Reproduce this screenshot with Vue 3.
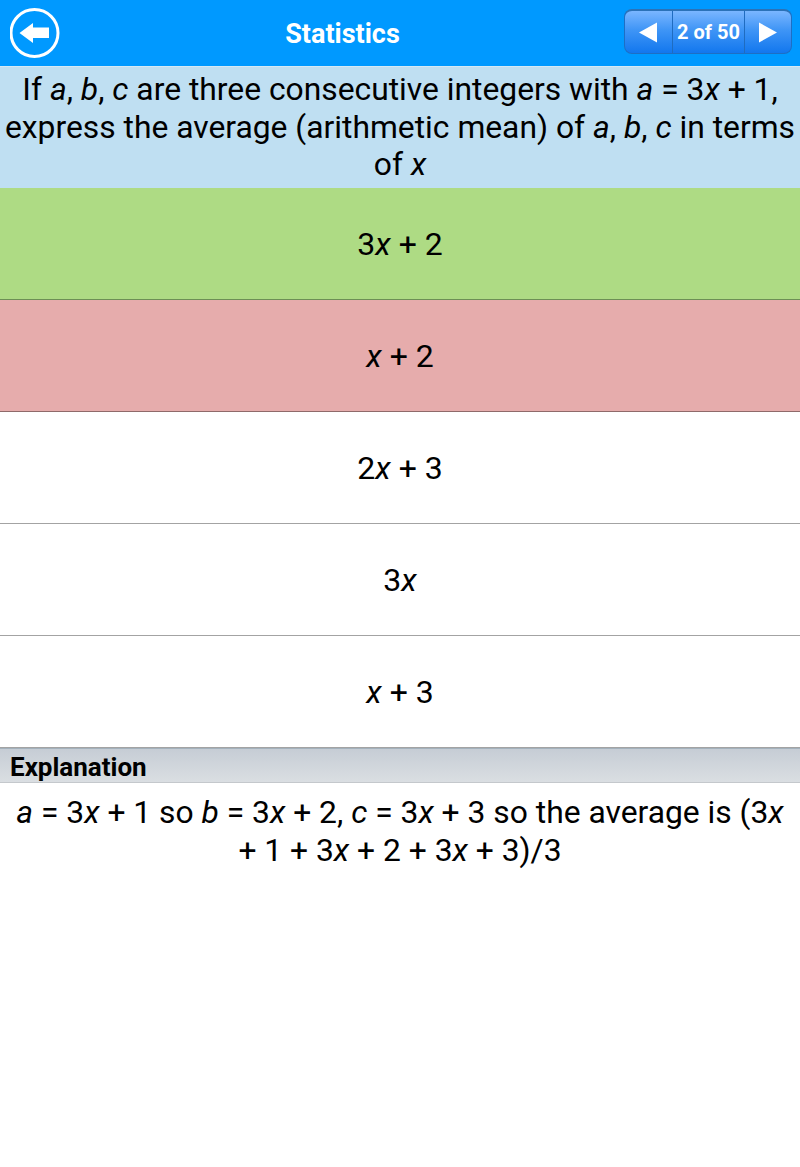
<script setup>
const answers = [
	{ id: 1, parts: [['3', false], ['x', true], [' + 2', false]], state: 'correct' },
	{ id: 2, parts: [['x', true], [' + 2', false]], state: 'wrong' },
	{ id: 3, parts: [['2', false], ['x', true], [' + 3', false]], state: '' },
	{ id: 4, parts: [['3', false], ['x', true]], state: '' },
	{ id: 5, parts: [['x', true], [' + 3', false]], state: '' },
];
</script>

<template>
	<div class="screen">
		<header class="topbar">
			<button class="back-btn" aria-label="Back">
				<svg width="50" height="50" viewBox="0 0 50 50">
					<circle cx="24.5" cy="25" r="23.5" fill="none" stroke="#fff" stroke-width="3" />
					<path d="M9.5 25 L23 15 V19.5 H39 V30 H23 V35 Z" fill="#fff" />
				</svg>
			</button>
			<h1 class="title">Statistics</h1>
			<div class="pager">
				<button class="pager-arrow prev" aria-label="Previous">
					<svg width="20" height="21" viewBox="0 0 20 21"><path d="M1 10.5 L19 0.5 V20.5 Z" fill="#fff" /></svg>
				</button>
				<span class="pager-count">2 of 50</span>
				<button class="pager-arrow next" aria-label="Next">
					<svg width="20" height="21" viewBox="0 0 20 21"><path d="M19 10.5 L1 0.5 V20.5 Z" fill="#fff" /></svg>
				</button>
			</div>
		</header>

		<section class="question">
			If <i>a</i>, <i>b</i>, <i>c</i> are three consecutive integers with <i>a</i> = 3<i>x</i> + 1,
			express the average (arithmetic mean) of <i>a</i>, <i>b</i>, <i>c</i> in terms of <i>x</i>
		</section>

		<ul class="answers">
			<li
				v-for="a in answers"
				:key="a.id"
				class="answer"
				:class="a.state"
			>
				<span>
					<template v-for="(p, idx) in a.parts" :key="idx">
						<i v-if="p[1]">{{ p[0] }}</i>
						<template v-else>{{ p[0] }}</template>
					</template>
				</span>
			</li>
		</ul>

		<div class="explain-head">Explanation</div>
		<p class="explain-body">
			<i>a</i> = 3<i>x</i> + 1 so <i>b</i> = 3<i>x</i> + 2, <i>c</i> = 3<i>x</i> + 3 so the average is (3<i>x</i>
			+ 1 + 3<i>x</i> + 2 + 3<i>x</i> + 3)/3
		</p>
	</div>
</template>

<style scoped>
.screen {
	width: 800px;
	height: 1167px;
	background: #fff;
	font-family: Roboto, sans-serif;
	color: #000;
	overflow: hidden;
}
.topbar {
	display: flex;
	align-items: center;
	justify-content: space-between;
	height: 66px;
	padding: 0 8px 0 10px;
	box-sizing: border-box;
	background: #0099ff;
	position: relative;
}
.back-btn {
	padding: 0;
	border: 0;
	background: none;
	width: 50px;
	height: 50px;
	margin-top: -1px;
}
.title {
	position: absolute;
	left: 0;
	top: 2px;
	width: 685px;
	margin: 0;
	line-height: 64px;
	text-align: center;
	color: #fff;
	font-size: 27px;
	font-weight: 700;
}
.pager {
	display: flex;
	align-items: stretch;
	width: 168px;
	height: 45px;
	margin-top: -3px;
	box-sizing: border-box;
	border: 1px solid #1d6fc4;
	border-top: 2px solid #2b72b8;
	border-radius: 8px;
	background: linear-gradient(#7ab6ff, #3f95f6 45%, #1277ee);
	overflow: hidden;
}
.pager-arrow {
	display: flex;
	align-items: center;
	justify-content: center;
	padding: 0;
	border: 0;
	background: none;
}
.pager-arrow.prev {
	width: 45px;
	padding-right: 2px;
	box-sizing: content-box;
}
.pager-arrow.next {
	width: 46px;
}
.pager-count {
	flex: 1;
	display: flex;
	align-items: center;
	justify-content: center;
	border-left: 1px solid #1f6cc0;
	border-right: 1px solid #1f6cc0;
	color: #fff;
	font-size: 20px;
	font-weight: 700;
}
.question {
	height: 122px;
	box-sizing: border-box;
	padding: 4px 0 0;
	background: #bfdff2;
	border-top: 1px solid #d6e9f5;
	font-size: 31.8px;
	line-height: 37.5px;
	text-align: center;
}
.answers {
	margin: 0;
	padding: 0;
	list-style: none;
}
.answer {
	display: flex;
	align-items: center;
	justify-content: center;
	height: 112px;
	padding-top: 1px;
	box-sizing: border-box;
	border-bottom: 1px solid #a3a3a3;
	font-size: 32px;
	background: #fff;
}
.answer.correct {
	background: #aedb84;
	border-bottom-color: #6d8f55;
}
.answer.wrong {
	background: #e6acac;
	border-bottom-color: #8f6a6a;
}
.explain-head {
	height: 35px;
	box-sizing: border-box;
	padding: 3px 0 0 10px;
	border-top: 1px solid #a3b1bc;
	border-bottom: 1px solid #c4c8cc;
	background: linear-gradient(#c6cdd5, #dadee2);
	font-size: 26px;
	font-weight: 700;
	line-height: 30px;
}
.explain-body {
	margin: 0;
	padding: 10px 8px 0;
	font-size: 31.8px;
	line-height: 38px;
	text-align: center;
}
</style>
